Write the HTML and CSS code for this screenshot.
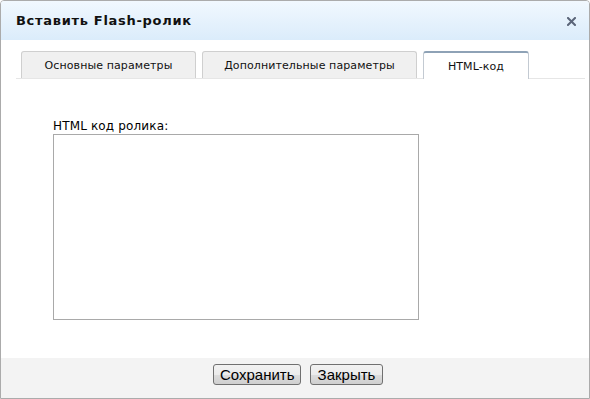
FILE: index.html
```
<!DOCTYPE html>
<html lang="ru">
<head>
<meta charset="utf-8">
<title>Вставить Flash-ролик</title>
<link rel="stylesheet" href="styles.css">
</head>
<body>
<div class="dialog">
  <div class="header">
    <span class="title">Вставить Flash-ролик</span>
    <span class="close"><svg width="9" height="9" viewBox="0 0 9 9"><path d="M1 1L8 8M8 1L1 8" stroke="#5b6579" stroke-width="2" stroke-linecap="square"/></svg></span>
  </div>
  <div class="main">
    <div class="tabs">
      <div class="tab tab-1">Основные параметры</div>
      <div class="tab tab-2">Дополнительные параметры</div>
      <div class="tab tab-3 active">HTML-код</div>
    </div>
    <div class="content">
      <label class="label" for="code">HTML код ролика:</label>
      <textarea id="code" class="code"></textarea>
    </div>
  </div>
  <div class="footer">
    <button class="btn btn-save">Сохранить</button>
    <button class="btn btn-close">Закрыть</button>
  </div>
</div>
</body>
</html>
```
FILE: styles.css
```
html, body {
  margin: 0;
  padding: 0;
  background: #ffffff;
}
.dialog {
  width: 590px;
  height: 399px;
  box-sizing: border-box;
  border: 1px solid #ababab;
  border-radius: 4px 4px 0 0;
  display: flex;
  flex-direction: column;
  overflow: hidden;
  font-family: "DejaVu Sans", Verdana, sans-serif;
  color: #000;
}
.header {
  height: 39px;
  flex: none;
  display: flex;
  align-items: center;
  justify-content: space-between;
  padding: 0 13px 0 15px;
  background: linear-gradient(#f1f8fe, #dbecfb);
}
.title {
  font-weight: bold;
  font-size: 13px;
  letter-spacing: 0.7px;
  color: #111;
}
.close {
  display: flex;
  margin-top: 1px;
}
.main {
  flex: 1;
  display: flex;
  flex-direction: column;
}
.tabs {
  margin: 11px 4px 0 15px;
  padding-left: 5px;
  display: flex;
  gap: 6px;
  border-bottom: 1px solid #e6e6e6;
  height: 27px;
}
.tab {
  box-sizing: border-box;
  height: 27px;
  border: 1px solid #cfcfcf;
  border-bottom: none;
  border-radius: 3px 3px 0 0;
  background: #f0f0f0;
  font-size: 11px;
  letter-spacing: 0.1px;
  color: #111;
  display: flex;
  align-items: center;
  justify-content: center;
}
.tab-1 { width: 175px; }
.tab-2 { width: 215px; }
.tab-3 { width: 106px; }
.tab.active {
  background: #ffffff;
  border-top: 2px solid #8ea2b6;
  border-left-color: #c3cad2;
  border-right-color: #c3cad2;
  height: 28px;
}
.content {
  padding: 40px 0 0 52px;
  display: flex;
  flex-direction: column;
  align-items: flex-start;
}
.label {
  font-size: 12px;
  line-height: 15px;
  letter-spacing: 0.15px;
  color: #000;
}
.code {
  width: 366px;
  height: 186px;
  box-sizing: border-box;
  margin: 0;
  border: 1px solid #a9a9a9;
  resize: none;
  padding: 2px;
}
.footer {
  height: 40px;
  flex: none;
  background: #f3f3f3;
  display: flex;
  justify-content: center;
  align-items: flex-start;
  padding: 6px 0 0 6px;
  box-sizing: border-box;
  gap: 9px;
}
.btn {
  font-family: "Liberation Sans", Arial, sans-serif;
  font-size: 15px;
  height: 21px;
  padding: 0 6px;
  border: 1px solid #707070;
  border-radius: 3px;
  background: linear-gradient(#f2f2f2, #ebebeb 50%, #dddddd 50%, #cfcfcf);
  color: #000;
  line-height: 19px;
}
.btn-save { width: 88px; }
.btn-close { width: 73px; }
```
